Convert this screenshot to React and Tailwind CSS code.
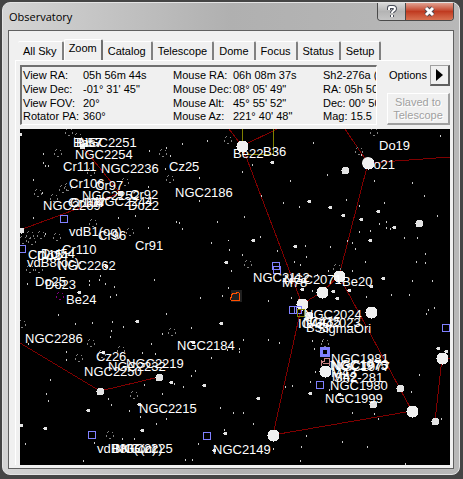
import React, { useState } from "react";

const TABS = ["All Sky", "Zoom", "Catalog", "Telescope", "Dome", "Focus", "Status", "Setup"];

const READOUT = [
	["View RA:", "05h 56m 44s", "Mouse RA:", "06h 08m 37s", "Sh2-276a ("],
	["View Dec:", "-01° 31' 45\"", "Mouse Dec:", "08° 05' 49\"", "RA: 05h 50"],
	["View FOV:", "20°", "Mouse Alt:", "45° 55' 52\"", "Dec: 00° 50"],
	["Rotator PA:", "360°", "Mouse Az:", "221° 40' 48\"", "Mag: 15.5"],
];

// x, y, radius
const STARS = [
	[82, 146, 3], [120, 193, 3], [20, 134, 2], [21, 230, 3], [79, 292, 2], [106, 266, 2],
	[137, 321, 2], [103, 352, 2], [100, 391, 4], [159, 377, 4], [88, 410, 2], [45, 428, 2],
	[21, 425, 2], [142, 430, 2], [139, 404, 2], [242, 146, 6], [272, 162, 2], [309, 201, 2],
	[253, 240, 2], [228, 240, 1], [295, 246, 2], [226, 262, 2], [221, 323, 2], [302, 289, 2],
	[193, 342, 2], [302, 304, 6], [309, 315, 4], [171, 382, 2], [204, 385, 2], [258, 398, 2],
	[310, 393, 2], [273, 435, 6], [225, 433, 2], [214, 450, 2], [368, 163, 6], [345, 170, 4],
	[419, 223, 4], [330, 207, 2], [343, 215, 2], [361, 219, 2], [378, 211, 2], [394, 227, 2],
	[370, 240, 2], [339, 276, 6], [322, 292, 6], [371, 312, 6], [442, 358, 6], [383, 278, 2],
	[333, 291, 2], [337, 298, 2], [349, 290, 2], [371, 286, 2], [438, 348, 2], [446, 351, 2],
	[325, 371, 6], [400, 388, 4], [412, 411, 6], [435, 421, 4], [373, 404, 4], [339, 394, 2],
];

const FAINT = [
	[149, 151], [43, 163], [48, 166], [45, 166], [33, 180], [42, 193], [33, 218], [45, 234], [43, 154],
	[148, 187], [118, 218], [135, 216], [148, 228], [27, 284], [58, 315], [75, 324], [92, 323], [112, 322],
	[111, 331], [123, 327], [110, 337], [162, 334], [154, 280], [116, 295], [110, 297], [100, 276],
	[99, 280], [89, 285], [89, 281], [114, 287], [105, 284], [28, 344], [66, 352], [151, 344], [142, 353],
	[80, 263], [66, 360], [50, 380], [46, 394], [48, 401], [108, 399], [111, 405], [129, 411], [144, 385],
	[162, 394], [140, 417], [156, 424], [25, 444], [83, 461], [122, 439], [134, 439], [94, 443], [155, 354],
	[182, 144], [207, 141], [170, 156], [165, 169], [199, 178], [199, 201], [242, 172], [252, 165],
	[290, 181], [261, 196], [283, 203], [299, 207], [244, 217], [217, 222], [176, 222], [179, 223],
	[182, 229], [211, 243], [260, 237], [166, 148], [229, 250], [242, 255], [231, 271], [228, 288],
	[222, 296], [200, 298], [268, 301], [166, 314], [191, 328], [239, 349], [239, 352], [243, 340],
	[268, 340], [279, 343], [277, 251], [305, 246], [294, 262], [300, 265], [306, 257], [291, 298],
	[211, 358], [227, 350], [195, 371], [191, 376], [174, 384], [183, 387], [220, 408], [233, 413],
	[243, 413], [166, 419], [253, 424], [198, 444], [185, 460], [192, 460], [273, 449], [301, 447],
	[300, 461], [306, 436], [285, 387], [292, 386], [224, 430], [313, 143], [327, 175], [374, 181],
	[412, 183], [424, 196], [346, 200], [359, 206], [384, 203], [437, 216], [379, 224], [386, 222],
	[386, 228], [390, 229], [359, 232], [370, 231], [404, 238], [417, 238], [440, 136], [347, 241],
	[352, 243], [361, 155], [330, 247], [365, 262], [425, 254], [425, 263], [416, 262], [412, 281],
	[432, 281], [434, 308], [428, 310], [426, 314], [409, 295], [391, 295], [366, 297], [312, 341],
	[314, 349], [312, 291], [352, 271], [328, 271], [317, 275], [355, 249], [419, 375], [411, 392],
	[352, 413], [374, 414], [378, 419], [441, 419], [342, 442], [367, 447], [405, 464], [315, 372],
	[310, 382], [329, 390], [322, 341],
];

// open clusters, drawn as broken rings
const CLUSTERS = [
	[69, 132], [78, 137], [58, 153], [91, 172], [125, 182], [63, 189], [68, 187], [38, 193], [54, 198],
	[93, 223], [130, 232], [41, 235], [30, 235], [163, 153], [23, 240], [32, 241], [57, 237], [30, 269],
	[39, 269], [22, 324], [91, 343], [121, 350], [79, 358], [134, 395], [110, 435], [102, 354],
	[228, 140], [170, 179], [248, 264], [172, 332], [374, 132], [359, 151], [337, 268], [325, 343],
];

const NEBULAE = [
	[22, 249], [64, 219], [92, 435], [276, 266], [277, 270], [293, 310], [298, 310], [207, 436],
	[446, 328], [320, 385],
];

const LABELS = [
	["Bas7", 73, 147], ["Bi57", 76, 147], ["NGC2251", 79, 147], ["NGC2254", 75, 159], ["Cr111", 63, 171],
	["NGC2236", 101, 173], ["Cr106", 69, 188], ["Cr97", 95, 190], ["NGC2252", 82, 200], ["Cr92", 130, 199],
	["Do22", 128, 210], ["NGC2244", 95, 206], ["NGC2269", 43, 210], ["Cr104", 68, 207], ["Cr107", 70, 207],
	["vdB1(og)", 69, 236], ["Cr96", 98, 240], ["Cr91", 135, 250], ["Cr110", 62, 254], ["Cr115", 28, 259],
	["Do24", 37, 260], ["Dol54", 41, 258], ["vdB8(oc)", 27, 267], ["NGC2262", 58, 270], ["Do25", 35, 286],
	["Do23", 45, 289], ["Be24", 66, 304], ["NGC2286", 25, 343], ["Cz26", 96, 361], ["NGC2250", 84, 376],
	["NGC2232", 108, 371], ["NGC2219", 126, 368], ["NGC2215", 139, 413], ["vdB80(oc)", 97, 453],
	["BNG(oc)", 112, 453], ["NGC2225", 115, 453], ["Cz25", 169, 171], ["NGC2186", 175, 197],
	["Be22", 233, 158], ["B36", 263, 156], ["Do19", 379, 150], ["Do21", 364, 169], ["NGC2112", 253, 282],
	["M78", 282, 287], ["NGC2071", 284, 284], ["Be20", 342, 286], ["NGC2184", 177, 350],
	["NGC2149", 213, 454], ["NGC2024", 304, 319], ["NGC2023", 303, 327], ["IC434", 298, 328],
	["IC435", 306, 326], ["B33", 306, 332], ["SigmaOri", 317, 333], ["NGC1981", 331, 363],
	["NGC1973", 331, 369], ["NGC1975", 330, 370], ["NGC1977", 332, 371], ["M43", 331, 377],
	["M42", 332, 381], ["Sh2-281", 334, 382], ["NGC1980", 330, 390], ["NGC1999", 325, 403],
];

const FIGURES = [
	"82,146 120,193 20,230",
	"20,343 100,391 159,377",
	"229,129 242,146 277,129",
	"242,146 302,304 322,292 339,276 412,411 273,435 302,304",
	"345,129 368,163 450,157",
	"368,163 339,276",
	"450,359 442,358 435,421",
];

const SkyMap = () => (
	<svg viewBox="20 129 430 336" className="block w-full bg-black" role="img" aria-label="Star map">
		<g fill="none" strokeWidth="1" shapeRendering="crispEdges">
			{FIGURES.map((points) => (
				<polyline key={points} points={points} stroke="#800000" />
			))}
			<path d="M242.5 129v25h31v-25" stroke="#808000" />
		</g>

		<g fill="#c8c8c8" shapeRendering="crispEdges">
			{FAINT.map(([x, y]) => (
				<rect key={`${x}-${y}`} x={x} y={y - 1} width="1" height="2" />
			))}
		</g>

		<g fill="none" stroke="#808080" strokeDasharray="2 2.400" shapeRendering="crispEdges">
			{CLUSTERS.map(([x, y]) => (
				<circle key={`${x}-${y}`} cx={x} cy={y} r="3.5" />
			))}
			<circle cx="60" cy="296" r="3.5" stroke="#800080" />
		</g>

		<g shapeRendering="crispEdges">
			<path d="M321 366v-5h3v-3h5v3h4M323 363h6M321 360l2 3M329 366v-4M298 303v-4h3" fill="none" stroke="#c88080" />
			<path d="M231 290h11v12h-11z" fill="#202020" />
			<path d="M231 295l3-2 1 1 3-2 2 2-1 3 1 3-3 1-3-1-2 1-2-2 2-3z" fill="none" stroke="#ff5000" />
		</g>

		<g fill="#e4e4e4" shapeRendering="crispEdges">
			{STARS.map(([x, y, r]) => (
				<circle key={`${x}-${y}`} cx={x + 0.5} cy={y + 0.5} r={r} fill={r === 6 ? "#f0f0f0" : undefined} />
			))}
		</g>

		<g fill="none" stroke="#8080ff" shapeRendering="crispEdges">
			{NEBULAE.map(([x, y]) => (
				<rect key={`${x}-${y}`} x={x - 3.5} y={y - 3.5} width="7" height="7" />
			))}
			<rect x="297.5" y="309.5" width="7" height="7" stroke="#808000" />
			<rect x="321.5" y="348.5" width="7" height="7" strokeWidth="3" />
		</g>

		<g fill="#fff" fontFamily='"Liberation Sans", Arial, sans-serif' fontSize="13">
			{LABELS.map(([name, x, y]) => (
				<text key={`${name}-${x}`} x={x} y={y}>{name}</text>
			))}
		</g>

		{/* bright star sits over the first letter of its label */}
		<circle cx="368" cy="163" r="6" fill="#f0f0f0" />
	</svg>
);

const TitleBar = () => (
	<header className="flex h-[27px] items-start justify-between pl-px">
		<h1 className="pt-1.5 font-['Open_Sans',sans-serif] text-[11px] leading-4 text-black">Observatory</h1>
		<div className="flex h-[18px] overflow-hidden rounded-b border border-t-0 border-[#4a4a4a]">
			<button aria-label="Help" className="flex w-7 items-center justify-center border-r border-[#4a4a4a] bg-linear-to-b from-[#d8d8d8] via-[#b4b4b4] to-[#c4c4c4]">
				<svg width="10" height="13" viewBox="0 0 10 13" fill="none">
					<path d="M2 5V3q0-1 1-1h3q2 0 2 2 0 1-2 2.200Q5 7 5 8M5 10v2" stroke="#484c58" strokeWidth="4" />
					<path d="M2 5V3q0-1 1-1h3q2 0 2 2 0 1-2 2.200Q5 7 5 8M5 10v2" stroke="#fff" strokeWidth="2" />
				</svg>
			</button>
			<button aria-label="Close" className="flex w-[47px] items-center justify-center bg-linear-to-b from-[#e0a090] via-[#c03a20] to-[#d87050]">
				<svg width="13" height="11" viewBox="0 0 13 11" fill="none">
					<path d="M3 2l7 7M10 2L3 9" stroke="#504850" strokeWidth="5" />
					<path d="M3 2l7 7M10 2L3 9" stroke="#fff" strokeWidth="3" />
				</svg>
			</button>
		</div>
	</header>
);

const App = () => {
	const [active, setActive] = useState("Zoom");

	return (
		<div className="bg-[#454545] pt-[2px] pr-[3px] pb-1 pl-[2px] font-['Liberation_Sans',Arial,sans-serif] text-[11px] leading-[13px] text-black">
			<div className="rounded-lg border border-[#e4e4e4] bg-linear-to-r from-[#d4d4d4] via-[#b0b0b0] to-[#b8b8b8] px-[5px] pb-[5px]">
				<TitleBar />

				<main className="border border-[#606060] bg-[#f0f0f0] pt-2 pr-[3px] pb-[3px] pl-[6px]">
					<div role="tablist" className="flex h-[21px] items-end pl-[3px]">
						{TABS.map((tab) => (
							<button
								key={tab}
								role="tab"
								aria-selected={tab === active}
								onClick={() => setActive(tab)}
								className={
									tab === active
										? "h-[21px] rounded-t-xs border-t border-r-2 border-l border-t-white border-r-[#707070] border-l-white bg-[#f0f0f0] px-1 pb-1"
										: "h-[19px] rounded-t-xs border-t border-r-2 border-t-white border-r-[#808080] px-[5px]"
								}
							>
								{tab}
							</button>
						))}
					</div>

					<section className="border-t border-l border-white pt-1 pl-1">
						<div className="flex gap-2.5 pb-1">
							<div className="grid h-[60px] min-w-0 flex-1 grid-cols-[60px_90px_60px_90px_minmax(0,1fr)] overflow-hidden border-t-2 border-r border-b border-l-2 border-t-[#707070] border-r-white border-b-white border-l-[#707070] pt-[2px] pl-px whitespace-nowrap">
								{READOUT.flat().map((text, i) => (
									<span key={i}>{text}</span>
								))}
							</div>
							<div className="flex w-[63px] flex-col justify-between">
								<div className="flex items-center justify-between">
									<label htmlFor="options" className="pl-0.5">Options</label>
									<button id="options" className="flex h-[21px] w-5 items-center justify-center border-t border-r-2 border-b-2 border-l border-t-[#a0a0a0] border-r-[#606060] border-b-[#606060] border-l-[#a0a0a0]">
										<svg width="7" height="12" viewBox="0 0 7 12"><path d="M0 0l7 6-7 6z" /></svg>
									</button>
								</div>
								<button disabled className="h-8 border-r-2 border-b-2 border-t border-l border-t-white border-l-white border-r-[#a0a0a0] border-b-[#a0a0a0] text-[#a0a0a0] [text-shadow:1px_1px_0_#fff]">
									Slaved to Telescope
								</button>
							</div>
						</div>
						<SkyMap />
					</section>
				</main>
			</div>
		</div>
	);
};

export default App;
